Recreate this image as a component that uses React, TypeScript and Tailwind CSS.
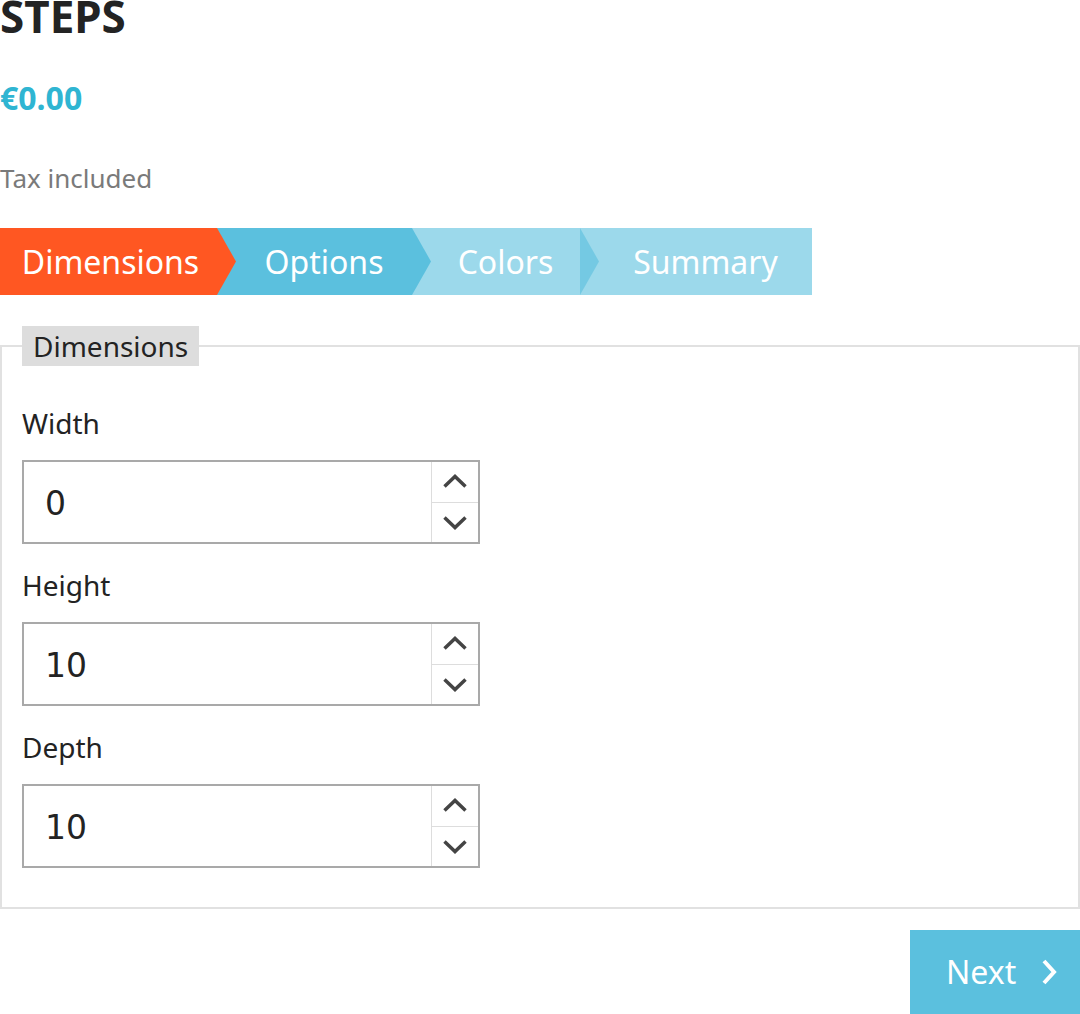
import React from 'react';

const steps = [
  { label: 'Dimensions', width: 'w-[217px]', bg: 'bg-[#ff5722]', extra: 'z-[4]', first: true },
  { label: 'Options', width: 'w-[195px]', bg: 'bg-[#5bc0de]', extra: 'z-[3]', first: false },
  { label: 'Colors', width: 'w-[168px]', bg: 'bg-[#5bc0de]', extra: 'z-[2] opacity-60', first: false },
  { label: 'Summary', width: 'w-[232px]', bg: 'bg-[#5bc0de]', extra: 'z-[1] opacity-60', first: false, last: true },
];

function Chevron({ down }: { down?: boolean }) {
  return (
    <svg width="26" height="15" viewBox="0 0 26 15" className="block">
      <polyline
        points={down ? '2.5,2.5 13,12.5 23.5,2.5' : '2.5,12.5 13,2.5 23.5,12.5'}
        fill="none"
        stroke="#444444"
        strokeWidth="3.5"
      />
    </svg>
  );
}

function NumberField({ label, value }: { label: string; value: string }) {
  return (
    <div className="flex flex-col">
      <label className="text-[28px] leading-[42px] text-[#232323] mb-[16px]">{label}</label>
      <div className="flex w-[458px] h-[84px] border-2 border-[#a9a9a9] bg-white">
        <div className="flex-1 flex items-center pl-[21px] pt-[3px] font-['DejaVu_Sans',sans-serif] text-[33px] text-[#232323]">
          {value}
        </div>
        <div className="w-[47px] flex flex-col border-l border-[#dddddd]">
          <button className="flex-1 flex items-center justify-center border-b border-[#dddddd]">
            <Chevron />
          </button>
          <button className="flex-1 flex items-center justify-center">
            <Chevron down />
          </button>
        </div>
      </div>
    </div>
  );
}

export default function App() {
  return (
    <div className="w-[1080px] h-[1014px] overflow-hidden bg-white font-['Noto_Sans',sans-serif]">
      <h1 className="mt-[-6px] text-[44px] leading-[44px] font-bold text-[#232323]">STEPS</h1>
      <div className="mt-[44px] text-[32px] leading-[32px] font-bold text-[#2fb5d2]">€0.00</div>
      <div className="mt-[51px] text-[26px] leading-[26px] text-[#7a7a7a]">Tax included</div>

      {/* step bar */}
      <ul className="mt-[37px] flex h-[67px]">
        {steps.map((s) => (
          <li
            key={s.label}
            className={`relative flex items-center justify-center h-full text-[32px] text-white ${s.width} ${s.bg} ${s.extra} ${s.first ? 'pl-[4px]' : 'pl-[19px]'}`}
          >
            {s.label}
            {!s.last && (
              <span
                className={`absolute top-0 right-[-19px] h-full w-[19px] ${s.bg} [clip-path:polygon(0_0,100%_50%,0_100%)]`}
              />
            )}
          </li>
        ))}
      </ul>

      <fieldset className="mt-[31px] border-2 border-[#e1e1e1] pl-[20px] pr-[20px] pt-[36px] pb-[39px]">
        <legend className="bg-[#dddddd] px-[11px] text-[28px] leading-[40px] text-[#232323]">Dimensions</legend>
        <div className="flex flex-col gap-[20px]">
          <NumberField label="Width" value="0" />
          <NumberField label="Height" value="10" />
          <NumberField label="Depth" value="10" />
        </div>
      </fieldset>

      <div className="mt-[21px] flex justify-end">
        <button className="flex items-center w-[170px] h-[84px] bg-[#5bc0de] pl-[36px] text-[32px] text-white">
          Next
          <svg width="16" height="26" viewBox="0 0 16 26" className="ml-[25px]">
            <polyline points="3,2 13,13 3,24" fill="none" stroke="white" strokeWidth="4" />
          </svg>
        </button>
      </div>
    </div>
  );
}
